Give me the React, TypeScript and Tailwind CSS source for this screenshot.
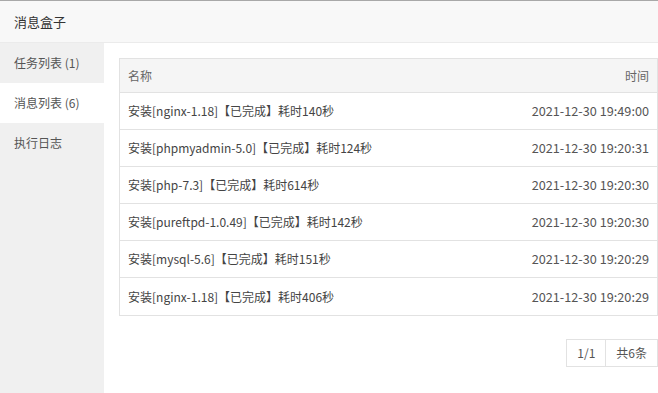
const rows = [
  { name: "安装[nginx-1.18]【已完成】耗时140秒", time: "2021-12-30 19:49:00" },
  { name: "安装[phpmyadmin-5.0]【已完成】耗时124秒", time: "2021-12-30 19:20:31" },
  { name: "安装[php-7.3]【已完成】耗时614秒", time: "2021-12-30 19:20:30" },
  { name: "安装[pureftpd-1.0.49]【已完成】耗时142秒", time: "2021-12-30 19:20:30" },
  { name: "安装[mysql-5.6]【已完成】耗时151秒", time: "2021-12-30 19:20:29" },
  { name: "安装[nginx-1.18]【已完成】耗时406秒", time: "2021-12-30 19:20:29" },
];

const tabs = ["任务列表 (1)", "消息列表 (6)", "执行日志"];

export default function App() {
  const active = 1;

  return (
    <div
      className="w-[658px] h-[393px] bg-white flex flex-col overflow-hidden text-[#555]"
      style={{ fontFamily: '"Microsoft YaHei", "Noto Sans CJK SC", sans-serif' }}
    >
      {/* title bar */}
      <div className="h-[43px] shrink-0 border-t border-[#a8a8a8] border-b border-b-[#ebebeb] bg-[#f8f8f8] flex items-center pl-[14px] text-[13px] text-[#333]">
        消息盒子
      </div>

      <div className="flex flex-1 min-h-0">
        {/* sidebar */}
        <div className="w-[104px] shrink-0 bg-[#f0f0f0] flex flex-col">
          {tabs.map((t, i) => (
            <div
              key={t}
              className={`h-10 flex items-center pl-[14px] text-[12px] text-[#555] ${
                i === active ? "bg-white" : ""
              }`}
            >
              {t}
            </div>
          ))}
        </div>

        {/* content */}
        <div className="flex-1 pl-[15px] pt-[15px] flex flex-col">
          <div className="border border-[#e2e2e2] text-[12px]">
            <div className="h-[34px] bg-[#f5f5f5] flex items-center justify-between pl-[8px] pr-[8px] text-[#666] border-b border-[#e2e2e2]">
              <span>名称</span>
              <span>时间</span>
            </div>
            {rows.map((r, i) => (
              <div
                key={i}
                className={`h-[37px] flex items-center justify-between pl-[8px] pr-[8px] text-[#444] ${
                  i < rows.length - 1 ? "border-b border-[#e2e2e2]" : ""
                }`}
              >
                <span>{r.name}</span>
                <span className="text-[12.7px] text-[#555]">{r.time}</span>
              </div>
            ))}
          </div>

          {/* pager */}
          <div className="mt-[23px] flex justify-end">
            <div className="flex border border-[#e2e2e2] h-[28px] text-[12px] text-[#555]">
              <div className="w-[39px] flex items-center justify-center border-r border-[#e2e2e2]">1/1</div>
              <div className="px-[10px] flex items-center">共6条</div>
            </div>
          </div>
        </div>
      </div>
    </div>
  );
}
